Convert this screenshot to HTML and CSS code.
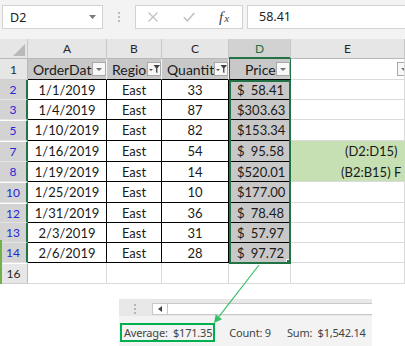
FILE: index.html
```html
<!DOCTYPE html>
<html>
<head>
<meta charset="utf-8">
<link rel="stylesheet" href="styles.css">
</head>
<body>
<div class="fbar">
  <div class="namebox"><span>D2</span><svg class="caret" width="7" height="4" viewBox="0 0 7 4"><path d="M0 0h7L3.5 4z" fill="#7a7a7a"/></svg></div>
  <div class="grip"><i></i><i></i><i></i></div>
  <div class="fxbox">
    <svg class="ico-x" width="10" height="10" viewBox="0 0 10 10"><path d="M.5.5l9 9M9.5.5l-9 9" stroke="#c2c2c2" stroke-width="1.3" fill="none"/></svg>
    <svg class="ico-ok" width="12" height="10" viewBox="0 0 12 10"><path d="M.8 5.2l3.6 3.6L11.3 1" stroke="#c2c2c2" stroke-width="1.6" fill="none"/></svg>
    <span class="fx"><i>f</i><i class="sx">x</i></span>
  </div>
  <div class="finput">58.41</div>
</div>

<div class="sheet">
  <div class="corner"><svg width="12" height="12" viewBox="0 0 12 12"><path d="M12 0V12H0Z" fill="#b9b9b9"/></svg></div>
  <div class="ch">A</div>
  <div class="ch">B</div>
  <div class="ch">C</div>
  <div class="ch sel">D</div>
  <div class="ch">E</div>

  <div class="rh">1</div>
  <div class="h"><span class="lbl">OrderDate</span><svg class="fb" width="14" height="14" viewBox="0 0 14 14"><rect x=".5" y=".5" width="13" height="13" fill="#f7f7f7" stroke="#a9a9a9"/><path d="M4 6h6l-3 3z" fill="#707070"/></svg></div>
  <div class="h"><span class="lbl">Region</span><svg class="fb" width="14" height="14" viewBox="0 0 14 14"><rect x=".5" y=".5" width="13" height="13" fill="#f7f7f7" stroke="#a9a9a9"/><path d="M2 7h4L4 9z" fill="#555"/><path d="M6.5 3h6.5l-2.6 3.2v5l-1.3-.9V6.2z" fill="#404040"/></svg></div>
  <div class="h"><span class="lbl">Quantity</span><svg class="fb" width="14" height="14" viewBox="0 0 14 14"><rect x=".5" y=".5" width="13" height="13" fill="#f7f7f7" stroke="#a9a9a9"/><path d="M2 7h4L4 9z" fill="#555"/><path d="M6.5 3h6.5l-2.6 3.2v5l-1.3-.9V6.2z" fill="#404040"/></svg></div>
  <div class="h dh"><span class="lbl">Price</span><svg class="fb" width="14" height="14" viewBox="0 0 14 14"><rect x=".5" y=".5" width="13" height="13" fill="#f7f7f7" stroke="#a9a9a9"/><path d="M4 6h6l-3 3z" fill="#707070"/></svg></div>
  <div class="c e1"><svg class="fb" width="14" height="14" viewBox="0 0 14 14"><rect x=".5" y=".5" width="13" height="13" fill="#f7f7f7" stroke="#a9a9a9"/><path d="M4 6h6l-3 3z" fill="#707070"/></svg></div>

  <div class="rh f">2</div>
  <div class="t">1/1/2019</div><div class="t">East</div><div class="t">33</div>
  <div class="d"><span>$</span><span>58.41</span></div><div class="c"></div>

  <div class="rh f">3</div>
  <div class="t">1/4/2019</div><div class="t">East</div><div class="t">87</div>
  <div class="d"><span>$</span><span>303.63</span></div><div class="c"></div>

  <div class="rh f gap">5</div>
  <div class="t">1/10/2019</div><div class="t">East</div><div class="t">82</div>
  <div class="d"><span>$</span><span>153.34</span></div><div class="c"></div>

  <div class="rh f gap">7</div>
  <div class="t">1/16/2019</div><div class="t">East</div><div class="t">54</div>
  <div class="d"><span>$</span><span>95.58</span></div><div class="c eg e7">(D2:D15)</div>

  <div class="rh f">8</div>
  <div class="t">1/19/2019</div><div class="t">East</div><div class="t">14</div>
  <div class="d"><span>$</span><span>520.01</span></div><div class="c eg e8">(B2:B15) F</div>

  <div class="rh f gap">10</div>
  <div class="t">1/25/2019</div><div class="t">East</div><div class="t">10</div>
  <div class="d"><span>$</span><span>177.00</span></div><div class="c"></div>

  <div class="rh f gap">12</div>
  <div class="t">1/31/2019</div><div class="t">East</div><div class="t">36</div>
  <div class="d"><span>$</span><span>78.48</span></div><div class="c"></div>

  <div class="rh f">13</div>
  <div class="t">2/3/2019</div><div class="t">East</div><div class="t">31</div>
  <div class="d"><span>$</span><span>57.97</span></div><div class="c"></div>

  <div class="rh f">14</div>
  <div class="t">2/6/2019</div><div class="t">East</div><div class="t">28</div>
  <div class="d"><span>$</span><span>97.72</span></div><div class="c"></div>

  <div class="rh gap">16</div>
  <div class="c"></div><div class="c"></div><div class="c"></div><div class="c"></div><div class="c"></div>

  <div class="selbox"><span class="handle"></span></div>
  <span class="tabstrip"></span>
</div>

<div class="status">
  <div class="scrollrow">
    <div class="vdots"><i></i><i></i><i></i></div>
    <div class="hscroll"><div class="lbtn"><svg width="4" height="6" viewBox="0 0 4 6"><path d="M4 0v6L0 3z" fill="#444"/></svg></div></div>
  </div>
  <div class="statusbar">
    <span class="avg">Average:&nbsp; $171.35</span>
    <span class="cnt">Count: 9</span>
    <span class="sum">Sum:&nbsp; $1,542.14</span>
  </div>
</div>

<svg class="arrow" width="405" height="346" viewBox="0 0 405 346">
  <line x1="259" y1="265" x2="218.9" y2="316.7" stroke="#35c167" stroke-width="1.2"/>
  <polygon points="214,323 222.1,319.2 215.7,314.2" fill="#35c167"/>
</svg>
</body>
</html>
```

FILE: styles.css
```css
* { box-sizing: border-box; margin: 0; padding: 0; }

body {
  width: 405px;
  height: 346px;
  overflow: hidden;
  background: #fff;
  position: relative;
  font-family: Lato, "Liberation Sans", sans-serif;
}

/* formula bar */
.fbar {
  height: 39px;
  background: #f3f3f3;
  display: flex;
  align-items: flex-start;
  padding: 5px 0 0 2px;
}
.namebox {
  width: 101px;
  height: 24px;
  background: #fff;
  border: 1px solid #d2d2d2;
  display: flex;
  align-items: center;
  justify-content: space-between;
  padding: 0 6px 0 7px;
  font: 12.5px "Noto Sans", sans-serif;
  color: #222;
}
.caret { margin-top: -1px; }
.grip {
  width: 32px;
  height: 24px;
  display: flex;
  flex-direction: column;
  align-items: center;
  justify-content: center;
  gap: 2px;
}
.grip i { width: 2px; height: 2px; background: #bdbdbd; }
.fxbox {
  width: 108px;
  height: 24px;
  background: #fff;
  border: 1px solid #d2d2d2;
  display: flex;
  align-items: center;
}
.ico-x { margin-left: 12px; }
.ico-ok { margin-left: 25px; }
.fx {
  margin-left: 24px;
  font-family: "Liberation Serif", serif;
  color: #444;
  font-size: 15px;
  line-height: 1;
}
.fx .sx { font-size: 11px; margin-left: 1px; }
.finput {
  flex: 1;
  margin-left: 4px;
  height: 24px;
  background: #fff;
  border: 1px solid #d2d2d2;
  border-right: 0;
  padding-left: 11px;
  font: 12.5px/22px "Noto Sans", sans-serif;
  color: #222;
}

/* sheet grid */
.sheet {
  display: grid;
  grid-template-columns: 28px 79px 55px 67px 62px 114px;
  grid-template-rows: 20px 21px 20px 20px 21px 21px 20px 21px 20px 20px 20px 21px;
  font: 13px Lato, sans-serif;
  color: #1a1a1a;
  position: relative;
}
.sheet > div {
  display: flex;
  align-items: center;
  min-width: 0;
  overflow: hidden;
  white-space: nowrap;
}
.corner {
  background: #e6e6e6;
  border-right: 1px solid #c8c8c8;
  border-bottom: 1px solid #b8b8b8;
  justify-content: flex-end;
  padding: 0 2px 2px 0;
}
.sheet > .corner { align-items: flex-end; }
.ch {
  background: #e6e6e6;
  border-right: 1px solid #c8c8c8;
  border-bottom: 1px solid #b8b8b8;
  justify-content: center;
  font-size: 12px;
  color: #262626;
}
.ch.sel {
  background: #d2d2d2;
  border-bottom: 2px solid #217346;
  color: #217346;
}
.rh {
  background: #e6e6e6;
  border-right: 1px solid #b8b8b8;
  border-bottom: 1px solid #cfcfcf;
  justify-content: center;
  font-size: 12px;
  color: #262626;
}
.rh.f {
  background: #d3d3d3;
  border-right: 2px solid #217346;
  border-bottom-color: #e3e3e3;
  color: #2626d4;
}
.rh.gap { border-top: 1px solid #fff; }

.c {
  border-right: 1px solid #dadada;
  border-bottom: 1px solid #dadada;
}
.t {
  border-right: 1px solid #000;
  border-bottom: 1px solid #000;
  justify-content: center;
}
.h {
  background: #c8c8c8;
  border-right: 1px solid #f4f4f4;
  border-bottom: 1px solid #000;
  padding-left: 5px;
  font-size: 14px;
}
.h .lbl {
  flex: 1;
  min-width: 0;
  overflow: hidden;
  white-space: nowrap;
}
.fb { flex-shrink: 0; }
.h.dh {
  padding-left: 15px;
  border-left: 1px solid #217346;
  border-right: 1px solid #217346;
}
.e1 .fb { margin-left: 106px; }
.d {
  background: #c8c8c8;
  border-right: 1px solid #000;
  border-bottom: 1px solid #000;
  justify-content: space-between;
  padding: 0 6px 0 8px;
}
.eg {
  background: #c6e0b4;
  border-bottom-color: #c6e0b4;
  border-right: 0;
}
.e7 { padding-left: 54px; }
.e8 { padding-left: 50px; border-bottom-color: #dadada; }

.selbox {
  grid-column: 5 / 6;
  grid-row: 3 / 12;
  position: absolute;
  top: 0;
  left: 0;
  right: 0;
  bottom: -1px;
  border: 2px solid #217346;
  z-index: 2;
}
.handle {
  position: absolute;
  right: -4px;
  bottom: -4px;
  width: 6px;
  height: 6px;
  background: #217346;
  box-shadow: -1px -1px 0 #fff;
}
.tabstrip {
  position: absolute;
  left: 0;
  top: 201px;
  width: 2px;
  height: 44px;
  background: #6fb245;
  z-index: 3;
}

/* status area */
.status {
  margin: 15px 0 0 119px;
  width: 253px;
}
.scrollrow {
  height: 17px;
  background: #e8e8e8;
  display: flex;
  align-items: flex-start;
  padding-top: 4px;
}
.vdots {
  width: 33px;
  height: 11px;
  display: flex;
  flex-direction: column;
  align-items: center;
  justify-content: center;
  gap: 2px;
  padding-right: 1px;
}
.vdots i { width: 2px; height: 2px; background: #b5b5b5; }
.hscroll {
  flex: 1;
  height: 12px;
  background: #fff;
  border: 1px solid #c8c8c8;
  border-right: 0;
  display: flex;
}
.lbtn {
  width: 15px;
  border-right: 1px solid #c8c8c8;
  display: flex;
  align-items: center;
  justify-content: center;
}
.statusbar {
  height: 30px;
  background: #f3f3f3;
  display: flex;
  align-items: flex-start;
  padding-top: 7px;
  font: 11px "Noto Sans", sans-serif;
  letter-spacing: -0.2px;
  color: #444;
  white-space: nowrap;
}
.statusbar span { flex-shrink: 0; }
.avg {
  margin-left: 1px;
  height: 19px;
  border: 2px solid #00b050;
  padding: 0 1px 0 2px;
  line-height: 15px;
}
.cnt { margin-left: 14px; line-height: 19px; }
.sum { margin-left: 16px; line-height: 19px; }

.arrow {
  position: absolute;
  left: 0;
  top: 0;
  pointer-events: none;
}
```
